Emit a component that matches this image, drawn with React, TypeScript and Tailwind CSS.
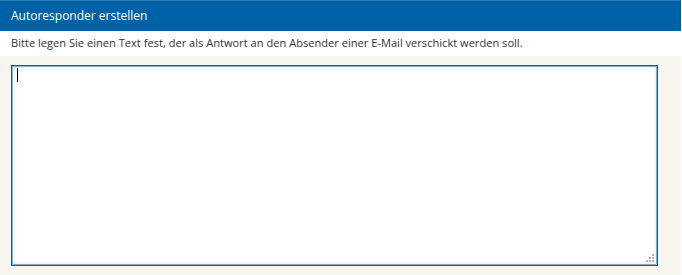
import React from "react";

export default function App() {
  return (
    <div className="w-[681px] h-[275px] bg-white flex flex-col" style={{ fontFamily: '"Open Sans", "Noto Sans", sans-serif' }}>
      <div className="h-[31px] bg-[#0062a6] flex items-center pl-[11px] text-white text-[12px] border-t border-[#2a7ab6]">
        Autoresponder erstellen
      </div>
      <div className="h-[25px] flex items-center pl-[11px] text-[11.1px] text-[#333333]">
        Bitte legen Sie einen Text fest, der als Antwort an den Absender einer E-Mail verschickt werden soll.
      </div>
      <div className="flex-1 bg-[#f9f6ef] pt-[9px] pl-[11px] pr-[23px]">
        <div className="relative w-[647px] h-[201px] bg-[#0c5fa6] p-px">
          <textarea
            className="block w-full h-full resize-none bg-white border-0 shadow-[inset_0_0_0_1px_rgba(12,95,166,0.45),inset_0_0_5px_rgba(0,0,0,0.16)] outline-none px-[5px] py-[3px] text-[13px] text-black"
          />
          <span className="absolute left-[6px] top-[3px] w-px h-[14px] bg-black" />
          <svg className="absolute right-[3px] bottom-[3px]" width="9" height="9" viewBox="0 0 9 9">
            <rect x="6" y="0" width="2" height="2" fill="#b4b4b4" />
            <rect x="3" y="3" width="2" height="2" fill="#b4b4b4" />
            <rect x="6" y="3" width="2" height="2" fill="#b4b4b4" />
            <rect x="0" y="6" width="2" height="2" fill="#b4b4b4" />
            <rect x="3" y="6" width="2" height="2" fill="#b4b4b4" />
            <rect x="6" y="6" width="2" height="2" fill="#b4b4b4" />
          </svg>
        </div>
      </div>
    </div>
  );
}
